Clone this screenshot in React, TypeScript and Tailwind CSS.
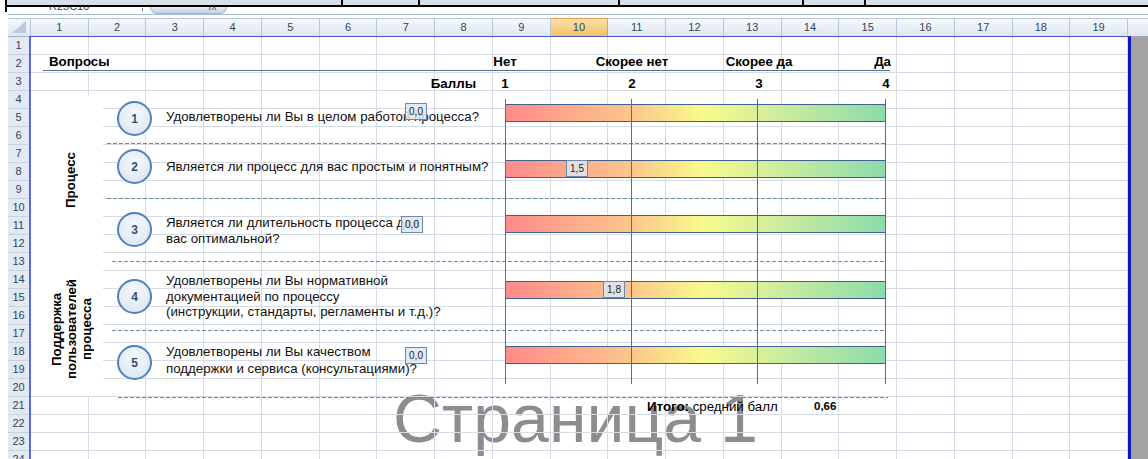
import { Fragment } from 'react'

// Лист Excel в режиме страничного просмотра: шапка столбцов, номера строк,
// сетка и поверх неё — анкета с градиентными шкалами.

const cols = Array.from({ length: 19 }, (_, i) => i + 1)
const rows = Array.from({ length: 24 }, (_, i) => i + 1)

const scaleHeads = ['Нет', 'Скорее нет', 'Скорее да', 'Да']
const scaleNums = ['1', '2', '3', '4']

type Question = {
  n: number
  lines: string[]
  block: string
  circle: string
  text: string
  bar: string
  label: string
  labelPos: string
  sep: string
}

const questions: Question[] = [
  {
    n: 1,
    lines: ['Удовлетворены ли Вы в целом работой процесса?'],
    block: 'h-[53px]',
    circle: 'mt-[11px]',
    text: 'mt-[19px] leading-[16px]',
    bar: 'mt-[14px]',
    label: '0,0',
    labelPos: 'left-[302px] top-[13px]',
    sep: 'ml-[4px] w-[779px]',
  },
  {
    n: 2,
    lines: ['Является ли процесс для вас простым и понятным?'],
    block: 'h-[54px]',
    circle: 'mt-[5px]',
    text: 'mt-[15px] leading-[16px]',
    bar: 'mt-[16px]',
    label: '1,5',
    labelPos: 'left-[463px] top-[16px]',
    sep: 'ml-[4px] w-[779px]',
  },
  {
    n: 3,
    lines: ['Является ли длительность процесса для', 'вас оптимальной?'],
    block: 'h-[62px]',
    circle: 'mt-[13px]',
    text: 'mt-[16px] leading-[16px]',
    bar: 'mt-[16px]',
    label: '0,0',
    labelPos: 'left-[298px] top-[17px]',
    sep: 'ml-[9px] w-[774px]',
  },
  {
    n: 4,
    lines: [
      'Удовлетворены ли Вы нормативной',
      'документацией по процессу',
      '(инструкции, стандарты, регламенты и т.д.)?',
    ],
    block: 'h-[68px]',
    circle: 'mt-[17px]',
    text: 'mt-[11px] leading-[15.5px]',
    bar: 'mt-[19px]',
    label: '1,8',
    labelPos: 'left-[500px] top-[19px]',
    sep: 'ml-[9px] w-[774px]',
  },
  {
    n: 5,
    lines: ['Удовлетворены ли Вы качеством', 'поддержки и сервиса (консультациями)?'],
    block: 'h-[66px]',
    circle: 'mt-[14px]',
    text: 'mt-[13px] leading-[16.5px]',
    bar: 'mt-[15px]',
    label: '0,0',
    labelPos: 'left-[302px] top-[16px]',
    sep: 'ml-[15px] w-[770px]',
  },
]

function TopChrome() {
  return (
    <>
      <div className="flex h-[7px]">
        <div className="w-[5px]" />
        <div className="flex flex-1 border-b-2 border-l-2 border-black bg-[#d9dfe7]">
          <div className="w-[336px] border-r-2 border-black" />
          <div className="w-[77px] border-r-2 border-black" />
          <div className="w-[200px] border-r-2 border-black" />
          <div className="w-[184px] border-r-2 border-black" />
          <div className="w-[62px] border-r-2 border-black" />
          <div className="flex-1" />
        </div>
      </div>
      <div className="flex h-[8px]">
        <div className="w-[5px]" />
        <div className="h-[5px] w-[2px] bg-black" />
        <div className="ml-px flex flex-1 items-start border-b border-[#a8bbd4]">
          <div className="ml-[41px] h-[4px] w-[93px] overflow-hidden">
            <span className="-mt-[7px] block text-[11px] leading-[12px] text-[#444]">R25C10</span>
          </div>
          <div className="mt-px h-[3px] w-px bg-[#777]" />
          <div className="ml-[7px] flex h-[7px] w-[77px] justify-end overflow-hidden rounded-b-[9px] border-x border-b border-[#a3b8d4] bg-gradient-to-b from-[#e2eaf5] to-[#c3d3e9] pr-[9px]">
            <span className="-mt-[7px] block text-[11px] italic leading-[12px] text-[#555]">fx</span>
          </div>
        </div>
      </div>
      <div className="h-[3px]" />
    </>
  )
}

function ColumnHeaders() {
  return (
    <div className="flex h-[18px] pl-[8px] text-[11px] text-[#34445c]">
      <div className="w-[23px] border-t border-r border-[#b2c4db] bg-gradient-to-b from-[#f5f8fc] to-[#dfe6f0]">
        <svg width="22" height="17" viewBox="0 0 22 17">
          <polygon points="18,2 18,14 4,14" fill="#b9c8dd" />
        </svg>
      </div>
      <div className="grid w-[1097px] grid-cols-[repeat(19,minmax(0,1fr))]">
        {cols.map((c) => (
          <div
            key={c}
            className={
              c === 10
                ? 'flex items-center justify-center border-t border-r border-[#f0a04a] bg-gradient-to-b from-[#fae0ab] to-[#f2c25f]'
                : 'flex items-center justify-center border-t border-r border-[#b6c7dd] bg-gradient-to-b from-[#f6f9fc] to-[#dee6f0]'
            }
          >
            {c}
          </div>
        ))}
      </div>
      <div className="flex-1 border-t border-[#b6c7dd] bg-gradient-to-b from-[#f6f9fc] to-[#dee6f0]" />
    </div>
  )
}

function RowHeaders() {
  return (
    <div className="w-[21px] shrink-0 border-t border-[#9fb3cf] text-[11px] text-[#34445c]">
      {rows.map((r) => (
        <div
          key={r}
          className="flex h-[18px] items-center justify-center border-b border-[#c7d3e3] bg-[#e2e9f3]"
        >
          {r}
        </div>
      ))}
    </div>
  )
}

function SurveyForm() {
  return (
    <div className="absolute left-[-1px] top-[-1px] z-20 w-[900px] text-[13.3px]">
      <div className="h-[18px]" />
      <div className="ml-[13px] flex h-[17px] w-[847px] border-b border-[#56709a] font-bold leading-[15px]">
        <div className="w-[462px] pl-[6px]">Вопросы</div>
        <div className="flex w-[381px] justify-between">
          {scaleHeads.map((t, i) => (
            <div
              key={t}
              className={
                i === 3
                  ? 'flex w-0 justify-end whitespace-nowrap'
                  : 'flex w-0 justify-center whitespace-nowrap'
              }
            >
              <span className={i === 3 ? '-mr-[5px]' : ''}>{t}</span>
            </div>
          ))}
        </div>
      </div>
      <div className="ml-[13px] flex h-[19px] pt-[5px] font-bold leading-[15px]">
        <div className="w-[462px] pr-[29px] text-right">Баллы</div>
        <div className="flex w-[381px] justify-between">
          {scaleNums.map((t) => (
            <div key={t} className="flex w-0 justify-center">
              {t}
            </div>
          ))}
        </div>
      </div>

      <div className="flex">
        <div className="ml-px mt-[6px] flex h-[300px] w-[72px] shrink-0 flex-col bg-white font-bold leading-[15px]">
          <div className="flex h-[162px] items-center justify-center pl-[6px] pt-[6px]">
            <span className="rotate-180 [writing-mode:vertical-rl]">Процесс</span>
          </div>
          <div className="flex h-[138px] items-center justify-center pl-[8px] pt-[4px]">
            <span className="rotate-180 text-center [writing-mode:vertical-rl]">
              Поддержка
              <br />
              пользователей
              <br />
              процесса
            </span>
          </div>
        </div>

        <div className="relative flex w-[790px] flex-col">
          {/* оси шкалы 1–4 */}
          <div className="absolute left-[402px] top-[9px] z-10 h-[285px] w-px bg-[#56717e]" />
          <div className="absolute left-[528px] top-[9px] z-10 h-[285px] w-px bg-[#56717e]" />
          <div className="absolute left-[654px] top-[9px] z-10 h-[285px] w-px bg-[#56717e]" />
          <div className="absolute left-[782px] top-[9px] z-10 h-[285px] w-px bg-[#56717e]" />

          {questions.map((q) => (
            <Fragment key={q.n}>
              <div className={`relative flex items-start ${q.block}`}>
                <div
                  className={`ml-[14px] flex h-[35px] w-[35px] shrink-0 items-center justify-center rounded-full border-2 border-[#4f81bd] bg-[radial-gradient(circle_at_50%_35%,#f5f8fc,#d8e4f1)] text-[12px] font-bold text-[#34506f] ${q.circle}`}
                >
                  {q.n}
                </div>
                <div className={`ml-[14px] w-[339px] shrink-0 text-[#111] ${q.text}`}>
                  {q.lines.map((l) => (
                    <div key={l} className="whitespace-nowrap">
                      {l}
                    </div>
                  ))}
                </div>
                <div
                  className={`h-[18px] w-[381px] shrink-0 border border-[#43618e] bg-[linear-gradient(90deg,#ff8a8a_0%,#fcc68b_33%,#f8fa8c_52%,#d6ef9b_68%,#8cdbac_100%)] ${q.bar}`}
                />
                <div
                  className={`absolute z-20 flex h-[17px] w-[22px] items-center justify-center border border-[#6b89ad] bg-[rgba(221,231,243,0.85)] text-[10px] leading-none text-[#222] ${q.labelPos}`}
                >
                  {q.label}
                </div>
              </div>
              <div
                className={`h-px bg-[repeating-linear-gradient(90deg,#6f8a96_0_4px,transparent_4px_6px)] ${q.sep}`}
              />
            </Fragment>
          ))}

          <div className="flex h-[18px] items-center pl-[544px]">
            <span className="w-[167px] whitespace-nowrap">
              <b>Итого:</b> средний балл
            </span>
            <span className="text-[11.5px] font-bold">0,66</span>
          </div>
        </div>
      </div>
    </div>
  )
}

export default function App() {
  return (
    <div className="relative h-[459px] w-[1148px] overflow-hidden bg-white font-['Liberation_Sans',Arial,sans-serif] text-black">
      <TopChrome />
      <ColumnHeaders />
      <div className="flex pl-[8px]">
        <RowHeaders />
        <div className="relative w-[1102px] shrink-0 border-t border-r-[3px] border-l-2 border-t-[#4654d4] border-r-[#0c18c4] border-l-[#5b67dc]">
          <span className="absolute left-[362px] top-[347px] z-0 whitespace-nowrap text-[68px] leading-none text-[#8d8d8d]">
            Страница 1
          </span>
          <div className="relative z-10">
            {rows.map((r) => (
              <div key={r} className="grid h-[18px] grid-cols-[repeat(19,minmax(0,1fr))]">
                {cols.map((c) => (
                  <div key={c} className="border-r border-b border-[#d5dbe7]" />
                ))}
              </div>
            ))}
          </div>
          <SurveyForm />
        </div>
        <div className="h-[440px] flex-1 bg-[#a3a3a3]" />
      </div>
    </div>
  )
}
